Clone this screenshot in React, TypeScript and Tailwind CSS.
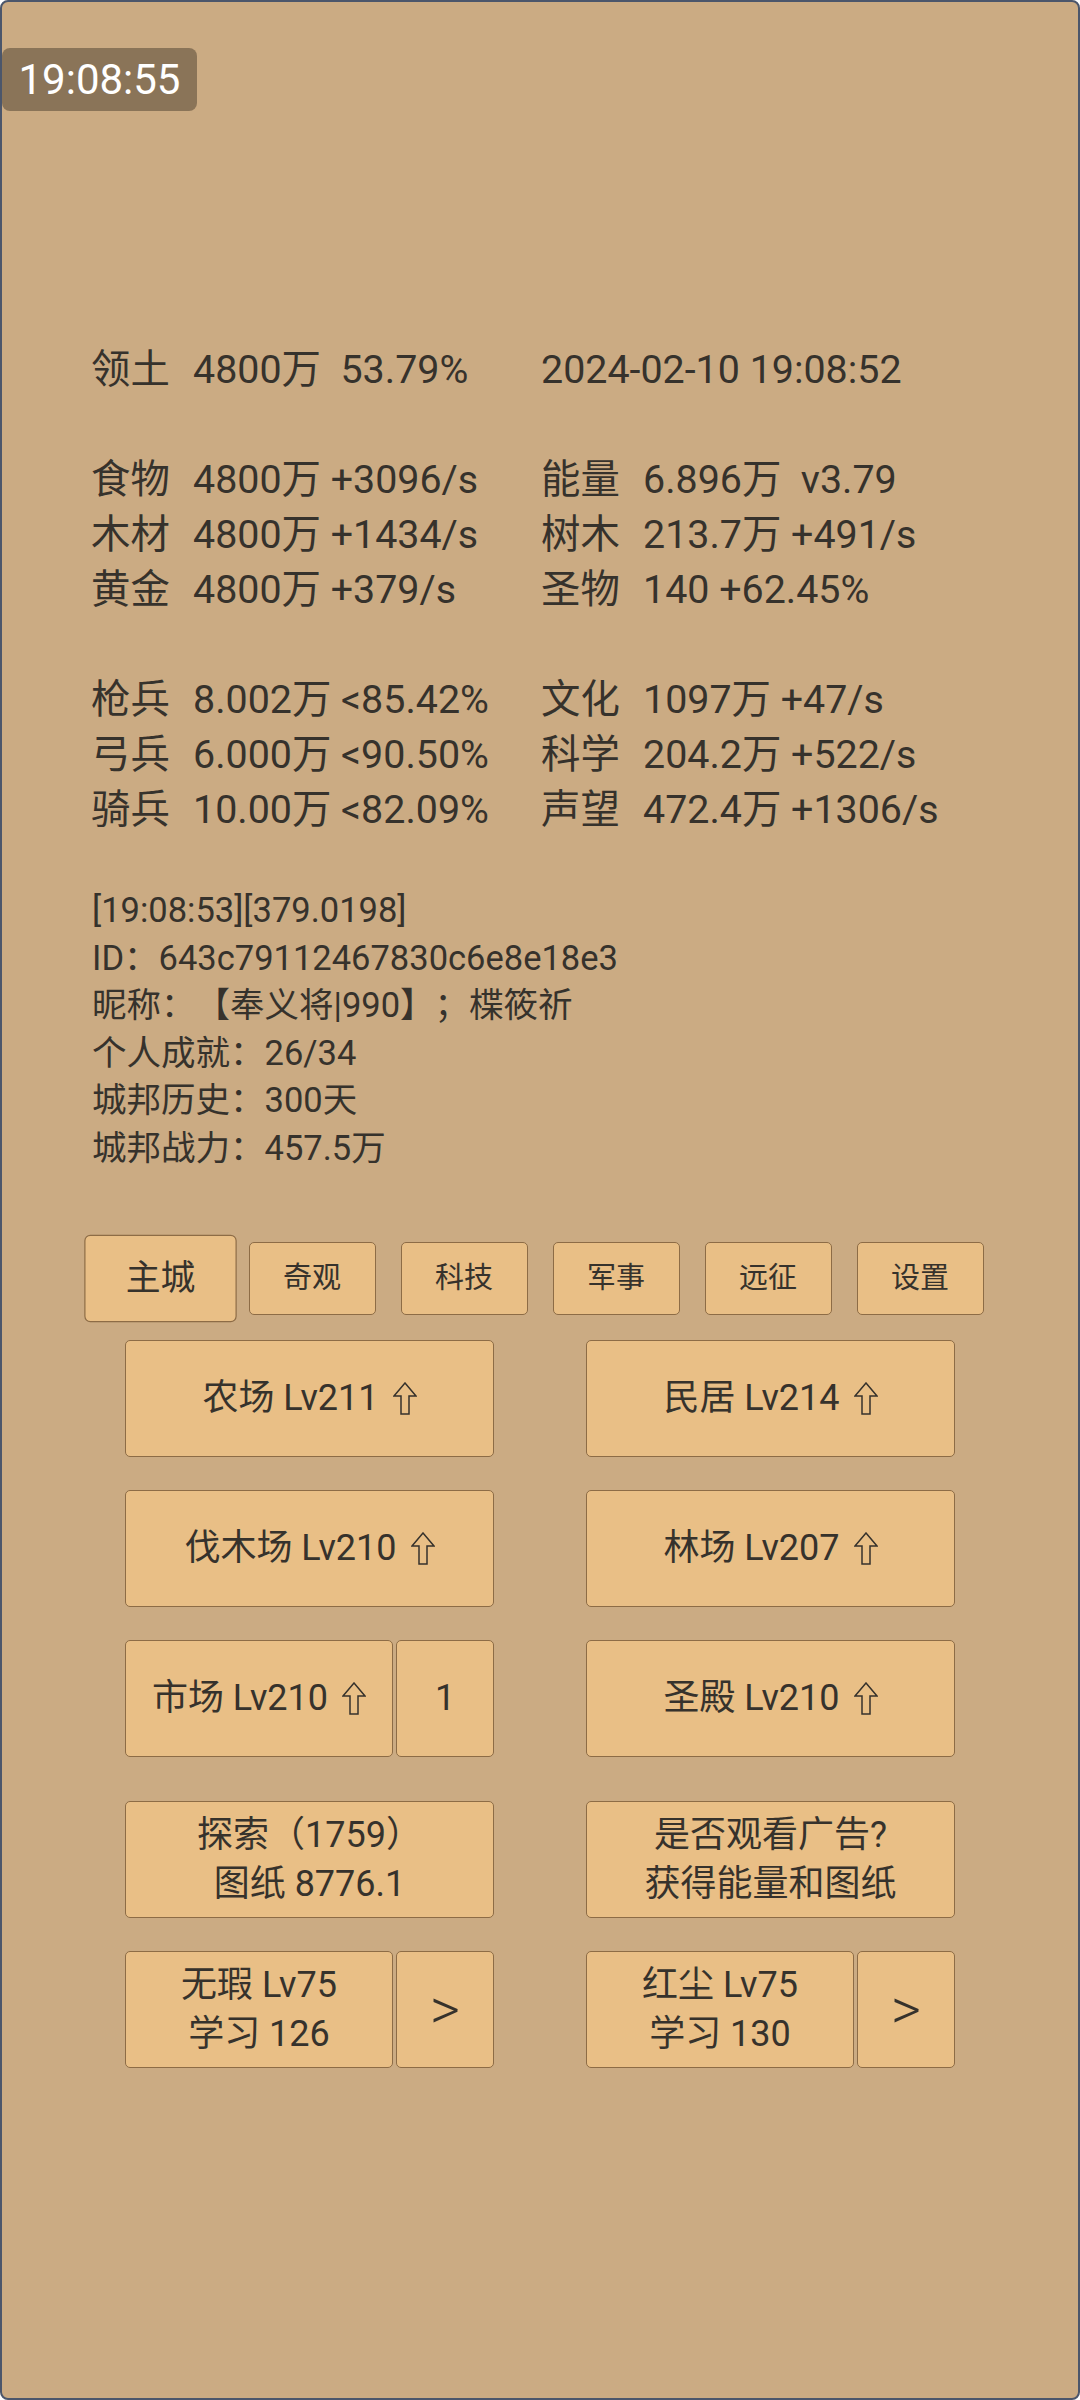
import React from "react";

function UpArrow() {
  return (
    <svg width="24" height="33" viewBox="0 0 24 33" className="ml-[14px] shrink-0" aria-hidden>
      <path d="M12 1 L23 14 L16 14 L16 32 L8 32 L8 14 L1 14 Z" fill="none" stroke="#36322c" strokeWidth="1.5" strokeLinejoin="miter" />
    </svg>
  );
}

function Btn({ children, className = "" }: { children: React.ReactNode; className?: string }) {
  return (
    <div
      className={
        "flex items-center justify-center text-center bg-[#e9bf86] border border-[#8d6c46] rounded-[5px] text-[36px] leading-[49px] h-[117px] " +
        className
      }
    >
      {children}
    </div>
  );
}

function StatCol({ label, value }: { label?: string; value: string }) {
  return (
    <div className="flex w-[450px] whitespace-pre">
      {label ? <span className="w-[102px] shrink-0">{label}</span> : null}
      <span>{value}</span>
    </div>
  );
}

const stats: ([string | undefined, string, string | undefined, string] | null)[] = [
  ["领土", "4800万  53.79%", undefined, "2024-02-10 19:08:52"],
  null,
  ["食物", "4800万 +3096/s", "能量", "6.896万  v3.79"],
  ["木材", "4800万 +1434/s", "树木", "213.7万 +491/s"],
  ["黄金", "4800万 +379/s", "圣物", "140 +62.45%"],
  null,
  ["枪兵", "8.002万 <85.42%", "文化", "1097万 +47/s"],
  ["弓兵", "6.000万 <90.50%", "科学", "204.2万 +522/s"],
  ["骑兵", "10.00万 <82.09%", "声望", "472.4万 +1306/s"],
];

const tabs = ["主城", "奇观", "科技", "军事", "远征", "设置"];

export default function App() {
  return (
    <div className="w-[1080px] h-[2400px] bg-[#cbab83] border-2 border-[#4b566b] rounded-[8px] overflow-hidden text-[#36322c] [text-spacing-trim:space-all] font-['Roboto','Noto_Sans_CJK_SC',sans-serif]">
      {/* clock */}
      <div className="mt-[46px] w-[195px] h-[63px] bg-[#8a7458] rounded-[8px] flex items-center justify-center text-white text-[42px] leading-none">
        19:08:55
      </div>

      {/* stats */}
      <div className="mt-[231px] pl-[89px] text-[39.4px] leading-[55px]">
        {stats.map((r, i) =>
          r ? (
            <div key={i} className="flex h-[55px]">
              <StatCol label={r[0]} value={r[1]} />
              <StatCol label={r[2]} value={r[3]} />
            </div>
          ) : (
            <div key={i} className="h-[55px]" />
          )
        )}
      </div>

      {/* info */}
      <div className="mt-[50px] pl-[90px] text-[34.5px] leading-[47.5px] [text-spacing-trim:space-all]">
        <div>[19:08:53][379.0198]</div>
        <div>ID：643c79112467830c6e8e18e3</div>
        <div>昵称：【奉义将|990】；楪筱祈</div>
        <div>个人成就：26/34</div>
        <div>城邦历史：300天</div>
        <div>城邦战力：457.5万</div>
      </div>

      {/* tabs */}
      <div className="mt-[70px] flex justify-center gap-[25px]">
        {tabs.map((t, i) => (
          <div
            key={t}
            className={
              "w-[127px] h-[73px] flex items-center justify-center bg-[#e9bf86] border border-[#8d6c46] rounded-[5px] text-[29px] " +
              (i === 0 ? "scale-[1.2] border-[#6e5233]" : "")
            }
          >
            {t}
          </div>
        ))}
      </div>

      {/* buildings */}
      <div className="mt-[25px] flex flex-col items-center">
        <div className="grid grid-cols-[369px_369px] gap-x-[92px]">
          <Btn>
            <span>农场 Lv211</span>
            <UpArrow />
          </Btn>
          <Btn>
            <span>民居 Lv214</span>
            <UpArrow />
          </Btn>
        </div>
        <div className="mt-[33px] grid grid-cols-[369px_369px] gap-x-[92px]">
          <Btn>
            <span>伐木场 Lv210</span>
            <UpArrow />
          </Btn>
          <Btn>
            <span>林场 Lv207</span>
            <UpArrow />
          </Btn>
        </div>
        <div className="mt-[33px] grid grid-cols-[369px_369px] gap-x-[92px]">
          <div className="flex gap-[3px]">
            <Btn className="w-[268px]">
              <span>市场 Lv210</span>
              <UpArrow />
            </Btn>
            <Btn className="w-[98px]">1</Btn>
          </div>
          <Btn>
            <span>圣殿 Lv210</span>
            <UpArrow />
          </Btn>
        </div>
        <div className="mt-[44px] grid grid-cols-[369px_369px] gap-x-[92px]">
          <Btn className="flex-col">
            <span>探索（1759）</span>
            <span>图纸 8776.1</span>
          </Btn>
          <Btn className="flex-col">
            <span>是否观看广告?</span>
            <span>获得能量和图纸</span>
          </Btn>
        </div>
        <div className="mt-[33px] grid grid-cols-[369px_369px] gap-x-[92px]">
          <div className="flex gap-[3px]">
            <Btn className="w-[268px] flex-col">
              <span>无瑕 Lv75</span>
              <span>学习 126</span>
            </Btn>
            <Btn className="w-[98px] text-[58px] font-light">&gt;</Btn>
          </div>
          <div className="flex gap-[3px]">
            <Btn className="w-[268px] flex-col">
              <span>红尘 Lv75</span>
              <span>学习 130</span>
            </Btn>
            <Btn className="w-[98px] text-[58px] font-light">&gt;</Btn>
          </div>
        </div>
      </div>
    </div>
  );
}
